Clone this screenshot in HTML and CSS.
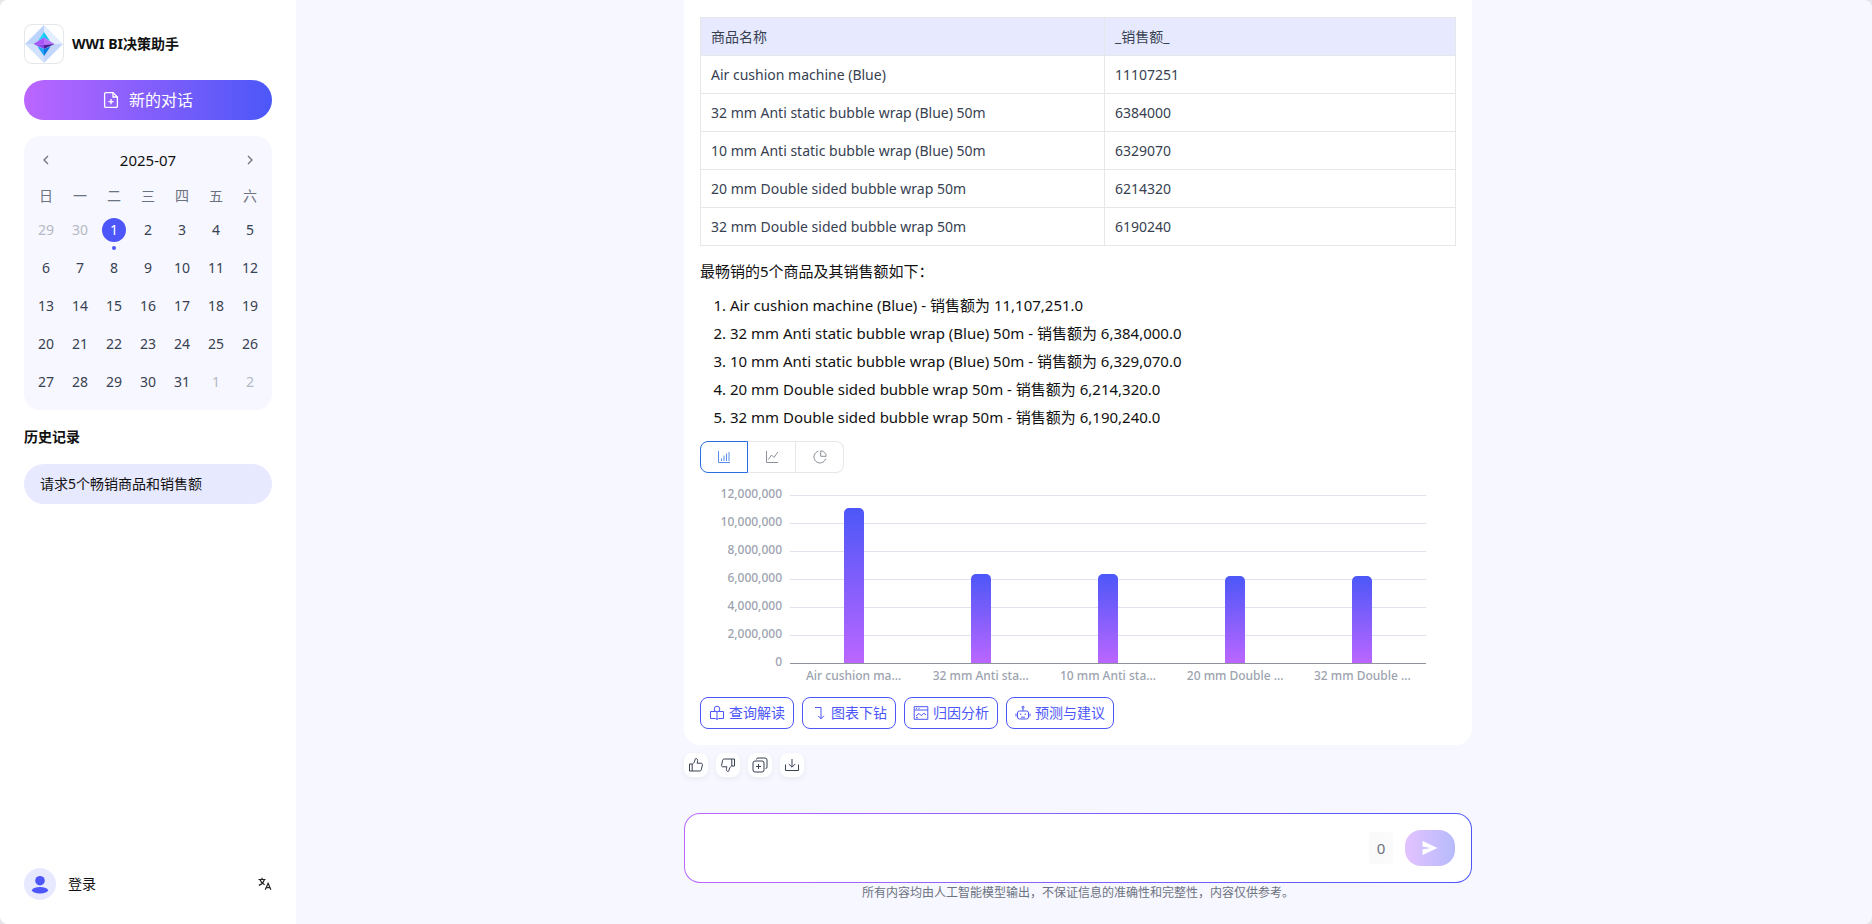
FILE: index.html
```html
<!DOCTYPE html>
<html lang="zh-CN">
<head>
  <meta charset="UTF-8">
  <meta name="viewport" content="width=device-width, initial-scale=1">
  <title>WWI BI决策助手</title>
  <link rel="stylesheet" href="styles.css">
</head>
<body>

  <div class="app">
    <aside class="sidebar">
      <header class="brand">
        <svg class="brand-logo" viewBox="1 1 38 38">
          <path d="M20 1 1 20h19z" fill="#bcd3fb"/>
          <path d="M20 1l19 19H20z" fill="#e4edfd"/>
          <path d="M1 20l19 19V20z" fill="#d3e2fc"/>
          <path d="M39 20 20 39V20z" fill="#c2d7fb"/>
          <path d="M20 8l-6 9 6-3z" fill="#22d3fa"/>
          <path d="M20 8l6 9-6-3z" fill="#12c4f5"/>
          <path d="M9.500 20L20 13.500V21z" fill="#a855f7"/>
          <path d="M30.500 20L20 13.500V21z" fill="#b872f8"/>
          <path d="M9.500 20L20 21v4z" fill="#8b45ea"/>
          <path d="M30.500 20L20 21v4z" fill="#4c1d95"/>
          <path d="M13.500 22.500L20 32v-7z" fill="#1aa5fa"/>
          <path d="M26.500 22.500L20 32v-7z" fill="#0b78e0"/>
        </svg>
        <h1>WWI BI决策助手</h1>
      </header>

      <button class="new-chat" type="button">
        <svg width="16" height="18" viewBox="0 0 16 18" fill="none" stroke="currentColor" stroke-width="1.3">
          <path d="M10 1.600H2.800A1.200 1.200 0 0 0 1.600 2.800v12.400a1.200 1.200 0 0 0 1.200 1.200h10.400a1.200 1.200 0 0 0 1.200-1.200V6z"/>
          <path d="M10 1.600V6h4.400M8 8v5.200M5.400 10.600h5.200"/>
        </svg>
        新的对话
      </button>

      <section class="calendar">
        <div class="calendar-head">
          <button type="button" aria-label="上个月"><svg width="6" height="10" viewBox="0 0 6 10"><path d="M5 1 1 5l4 4"/></svg></button>
          <span>2025-07</span>
          <button type="button" aria-label="下个月"><svg width="6" height="10" viewBox="0 0 6 10"><path d="M1 1l4 4-4 4"/></svg></button>
        </div>
        <table>
          <thead>
            <tr><th>日</th><th>一</th><th>二</th><th>三</th><th>四</th><th>五</th><th>六</th></tr>
          </thead>
          <tbody>
            <tr><td class="other">29</td><td class="other">30</td><td><span class="today">1</span></td><td>2</td><td>3</td><td>4</td><td>5</td></tr>
            <tr><td>6</td><td>7</td><td>8</td><td>9</td><td>10</td><td>11</td><td>12</td></tr>
            <tr><td>13</td><td>14</td><td>15</td><td>16</td><td>17</td><td>18</td><td>19</td></tr>
            <tr><td>20</td><td>21</td><td>22</td><td>23</td><td>24</td><td>25</td><td>26</td></tr>
            <tr><td>27</td><td>28</td><td>29</td><td>30</td><td>31</td><td class="other">1</td><td class="other">2</td></tr>
          </tbody>
        </table>
      </section>

      <h2>历史记录</h2>
      <a class="history-item" href="#">请求5个畅销商品和销售额</a>

      <footer class="user">
        <svg width="32" height="32" viewBox="0 0 32 32">
          <circle cx="16" cy="16" r="16" fill="#e7e9ff"/>
          <circle cx="16" cy="12.700" r="4.800" fill="#4d56f8"/>
          <ellipse cx="16" cy="22.300" rx="8" ry="3.200" fill="#4d56f8"/>
        </svg>
        <a href="#">登录</a>
        <button type="button" aria-label="切换语言">
          <svg width="14" height="14" viewBox="0 0 14 14" fill="none" stroke="#222" stroke-width="1.200">
            <path d="M.5 2.500h7M4 .8v1.700M6.300 2.500C5.700 5.200 3.500 7.300.8 8.400M1.900 2.500C2.600 4.700 4.300 6.500 6.600 7.700"/>
            <path d="M7.300 12.800l2.800-6.600 2.800 6.600M8.200 10.700h3.800"/>
          </svg>
        </button>
      </footer>
    </aside>

    <main class="main">
      <div class="column">
        <article class="card">
          <table class="result">
            <thead>
              <tr><th>商品名称</th><th>_销售额_</th></tr>
            </thead>
            <tbody>
              <tr><td>Air cushion machine (Blue)</td><td>11107251</td></tr>
              <tr><td>32 mm Anti static bubble wrap (Blue) 50m</td><td>6384000</td></tr>
              <tr><td>10 mm Anti static bubble wrap (Blue) 50m</td><td>6329070</td></tr>
              <tr><td>20 mm Double sided bubble wrap 50m</td><td>6214320</td></tr>
              <tr><td>32 mm Double sided bubble wrap 50m</td><td>6190240</td></tr>
            </tbody>
          </table>

          <p>最畅销的5个商品及其销售额如下：</p>
          <ol>
            <li>Air cushion machine (Blue) - 销售额为 11,107,251.0</li>
            <li>32 mm Anti static bubble wrap (Blue) 50m - 销售额为 6,384,000.0</li>
            <li>10 mm Anti static bubble wrap (Blue) 50m - 销售额为 6,329,070.0</li>
            <li>20 mm Double sided bubble wrap 50m - 销售额为 6,214,320.0</li>
            <li>32 mm Double sided bubble wrap 50m - 销售额为 6,190,240.0</li>
          </ol>

          <div class="chart-types">
            <button class="active" type="button" aria-label="柱状图">
              <svg width="14" height="14" viewBox="0 0 14 14"><path d="M1.500 1v11.500H13M4.500 8.500v2.500M7 5.500V11M9.500 3.500V11M12 2v9"/></svg>
            </button>
            <button type="button" aria-label="折线图">
              <svg width="14" height="14" viewBox="0 0 14 14"><path d="M1.500 1v11.500H13M3.500 9.500l3-4.500 2.500 2.500 3.800-5.500"/></svg>
            </button>
            <button type="button" aria-label="饼图">
              <svg width="14" height="14" viewBox="0 0 14 14"><path d="M5.300 1.200A6 6 0 1 0 12.700 8.700M7.700.8v5.500h5.500A5.600 5.600 0 0 0 7.700.8z"/></svg>
            </button>
          </div>

          <div class="chart">
            <div class="y-axis">
              <span>12,000,000</span>
              <span>10,000,000</span>
              <span>8,000,000</span>
              <span>6,000,000</span>
              <span>4,000,000</span>
              <span>2,000,000</span>
              <span>0</span>
            </div>
            <div class="plot">
              <div style="height: 92.56%"></div>
              <div style="height: 53.2%"></div>
              <div style="height: 52.74%"></div>
              <div style="height: 51.79%"></div>
              <div style="height: 51.59%"></div>
            </div>
            <div class="x-axis">
              <span>Air cushion ma...</span>
              <span>32 mm Anti sta...</span>
              <span>10 mm Anti sta...</span>
              <span>20 mm Double ...</span>
              <span>32 mm Double ...</span>
            </div>
          </div>

          <div class="actions">
            <button type="button">
              <svg width="16" height="16" viewBox="0 0 16 16"><circle cx="8" cy="4" r="2.800"/><path d="M6.500 6.500H1.500v7H6.500L8 14.500l1.500-1h5v-7h-5M8 6.800v7.700"/></svg>
              查询解读
            </button>
            <button type="button">
              <svg width="16" height="16" viewBox="0 0 16 16"><path d="M4 2.500h6V13.500M7 10.800l3 3 3-3"/></svg>
              图表下钻
            </button>
            <button type="button">
              <svg width="16" height="16" viewBox="0 0 16 16"><path d="M1.200 1.700h13.600v12.600H1.200zM1.200 5h13.600M3 3.400h1M5.500 3.400h1M3 11l3-2.600 2.200 2.300 2.700-2.500L13 10M3 12.700h2"/></svg>
              归因分析
            </button>
            <button type="button">
              <svg width="16" height="16" viewBox="0 0 16 16"><path d="M4.500 6h7a2 2 0 0 1 2 2v4a2 2 0 0 1-2 2h-7a2 2 0 0 1-2-2V8a2 2 0 0 1 2-2zM8 6V3M1 8.500v3M15 8.500v3M5.800 8.500v1.500M10.200 8.500v1.500M6 12.200h4"/><circle cx="8" cy="2.200" r="1"/></svg>
              预测与建议
            </button>
          </div>
        </article>

        <div class="feedback">
          <button type="button" aria-label="赞">
            <svg width="16" height="16" viewBox="0 0 16 16"><path d="M1.500 7h2.700v7H1.500zM4.200 7.200C6 6.200 6.800 4.500 7 2.600c0-1.500 2.600-1.500 2.600.8 0 1-.2 1.800-.5 2.800h4c1 0 1.500.7 1.300 1.600l-1.100 5c-.2.800-.7 1.200-1.500 1.200H4.200"/></svg>
          </button>
          <button type="button" aria-label="踩">
            <svg width="16" height="16" viewBox="0 0 16 16"><path d="M14.500 9h-2.700V2h2.700zM11.800 8.800C10 9.800 9.200 11.500 9 13.400c0 1.500-2.600 1.500-2.600-.8 0-1 .2-1.800.5-2.800h-4c-1 0-1.500-.7-1.300-1.600l1.100-5c.2-.8.7-1.200 1.500-1.200h7.600"/></svg>
          </button>
          <button type="button" aria-label="复制">
            <svg width="16" height="16" viewBox="0 0 16 16"><rect x="1" y="4" width="11" height="11" rx="2"/><path d="M4.500 2.500A1.500 1.500 0 0 1 6 1h7a2 2 0 0 1 2 2v7a1.500 1.500 0 0 1-1.500 1.500M6.500 7v5M4 9.500h5"/></svg>
          </button>
          <button type="button" aria-label="下载">
            <svg width="16" height="16" viewBox="0 0 16 16"><path d="M1.500 7.500v6h13v-6M8 2v8M4.800 7L8 10.200 11.200 7"/></svg>
          </button>
        </div>

        <form class="composer">
          <textarea aria-label="输入问题"></textarea>
          <span class="count">0</span>
          <button type="button" aria-label="发送">
            <svg width="16" height="14" viewBox="0 0 16 14"><path d="M.5 0 15.500 7 .5 14V8.500L8.500 7 .5 5.500z" fill="#fff"/></svg>
          </button>
        </form>
        <p class="notice">所有内容均由人工智能模型输出，不保证信息的准确性和完整性，内容仅供参考。</p>
      </div>
    </main>
  </div>

</body>
</html>
```

FILE: styles.css
```css
* {
  box-sizing: border-box;
}
body {
  margin: 0;
  background: #e6e6ea;
  color: #111;
  font-family: "Noto Sans", "Noto Sans CJK SC", sans-serif;
  font-size: 14px;
  line-height: 20px;
}
button {
  padding: 0;
  border: 0;
  background: none;
  font: inherit;
  color: inherit;
  cursor: pointer;
}
a {
  color: inherit;
  text-decoration: none;
}
svg {
  display: block;
  flex: none;
}
table {
  border-collapse: collapse;
  width: 100%;
}
.app {
  display: flex;
  min-height: 100vh;
  border-radius: 8px;
  background: #f7f7ff;
  overflow: hidden;
}

/* sidebar */
.sidebar {
  display: flex;
  flex-direction: column;
  flex: none;
  width: 296px;
  padding: 24px;
  background: #fff;
}
.brand {
  display: flex;
  align-items: center;
  gap: 8px;
}
.brand-logo {
  width: 40px;
  height: 40px;
  border: 1px solid #e5e7eb;
  border-radius: 8px;
}
.brand h1,
.sidebar h2 {
  margin: 0;
  font-size: 14px;
  font-weight: 700;
}
.new-chat {
  display: flex;
  align-items: center;
  justify-content: center;
  gap: 10px;
  height: 40px;
  margin: 16px 0;
  border-radius: 20px;
  background: linear-gradient(90deg, #bb66ff, #4c57f8);
  color: #fff;
  font-size: 16px;
}
.calendar {
  padding: 9px 5px;
  border-radius: 16px;
  background: #f7f7ff;
}
.calendar-head {
  display: flex;
  align-items: center;
  justify-content: space-between;
  height: 30px;
  font-size: 15px;
}
.calendar-head button {
  display: flex;
  justify-content: center;
  width: 34px;
}
.calendar-head path {
  fill: none;
  stroke: #6b7280;
  stroke-width: 1.3;
}
.calendar table {
  table-layout: fixed;
}
.calendar th,
.calendar td {
  height: 38px;
  padding: 0;
  color: #374151;
  font-weight: 400;
  text-align: center;
}
.calendar th {
  height: 36px;
  padding-top: 6px;
  color: #6b7280;
}
.calendar .other {
  color: #b4b9c3;
}
.calendar .today {
  position: relative;
  display: block;
  width: 24px;
  margin: 0 auto;
  border-radius: 50%;
  background: #4d56f8;
  color: #fff;
  line-height: 24px;
}
.calendar .today::after {
  content: "";
  position: absolute;
  left: 10px;
  top: 28px;
  width: 4px;
  height: 4px;
  border-radius: 50%;
  background: #4d56f8;
}
.sidebar h2 {
  margin: 17px 0;
}
.history-item {
  padding: 10px 16px;
  border-radius: 20px;
  background: #e7e9ff;
}
.user {
  display: flex;
  align-items: center;
  gap: 12px;
  margin-top: auto;
}
.user button {
  margin-left: auto;
}

/* conversation */
.main {
  display: flex;
  flex: 1;
  justify-content: center;
  padding-right: 12px;
}
.column {
  display: flex;
  flex-direction: column;
  width: 100%;
  max-width: 788px;
}
.card {
  padding: 17px 16px 16px;
  border-radius: 0 0 16px 16px;
  background: #fff;
}
.result th,
.result td {
  height: 38px;
  padding: 0 10px;
  border: 1px solid #e5e7eb;
  color: #374151;
  font-weight: 400;
  text-align: left;
}
.result th {
  background: #e7e9ff;
}
.result th:first-child {
  width: 404px;
}
.card p {
  margin: 15px 0 10px;
  font-size: 15px;
}
.card ol {
  margin: 0;
  padding-left: 30px;
  font-size: 15px;
  line-height: 28px;
}
.chart-types {
  display: flex;
  margin-top: 10px;
}
.chart-types button {
  display: flex;
  align-items: center;
  justify-content: center;
  width: 48px;
  height: 32px;
  border: 1px solid #e5e7eb;
}
.chart-types button + button {
  border-left: 0;
}
.chart-types button:first-child {
  border-radius: 8px 0 0 8px;
}
.chart-types button:last-child {
  border-radius: 0 8px 8px 0;
}
.chart-types .active {
  border-color: #2a6fe0;
}
.chart-types path {
  fill: none;
  stroke: #8b909a;
}
.chart-types .active path {
  stroke: #5b8def;
}
.chart {
  display: grid;
  grid-template-columns: 82px 1fr;
  column-gap: 8px;
  margin-top: 11px;
  padding-right: 30px;
  color: #9ca3af;
  font-size: 12px;
  font-weight: 500;
  line-height: 20px;
}
.y-axis {
  display: flex;
  flex-direction: column;
  justify-content: space-between;
  height: 188px;
  margin-bottom: -10px;
  text-align: right;
}
.y-axis span {
  height: 20px;
}
.plot {
  display: flex;
  align-items: flex-end;
  justify-content: space-around;
  height: 169px;
  margin-top: 11px;
  border-bottom: 1px solid #8f939e;
  background: repeating-linear-gradient(#e0e3ee 0 1px, transparent 1px 28px);
}
.plot div {
  width: 20px;
  border-radius: 5px 5px 0 0;
  background: linear-gradient(#4c57f8, #bb66ff);
}
.x-axis {
  display: grid;
  grid-column: 2;
  grid-template-columns: repeat(5, 1fr);
  padding-top: 2px;
  text-align: center;
}
.actions {
  display: flex;
  gap: 8px;
  margin-top: 11px;
}
.actions button {
  display: flex;
  align-items: center;
  gap: 4px;
  height: 32px;
  padding: 0 8px;
  border: 1px solid #4d56f8;
  border-radius: 8px;
  color: #4d56f8;
}
.actions svg,
.feedback svg {
  fill: none;
  stroke: currentColor;
}
.feedback {
  display: flex;
  gap: 8px;
  margin-top: 8px;
}
.feedback button {
  display: flex;
  align-items: center;
  justify-content: center;
  width: 24px;
  height: 24px;
  border-radius: 8px;
  background: #fff;
  box-shadow: 0 2px 6px rgba(0, 0, 0, 0.06);
  color: #374151;
}

/* input */
.composer {
  display: flex;
  align-items: center;
  height: 70px;
  margin-top: auto;
  padding: 0 16px;
  border: 1px solid transparent;
  border-radius: 16px;
  background: linear-gradient(#fff, #fff) padding-box, linear-gradient(90deg, #bb66ff, #4c57f8) border-box;
}
.composer textarea {
  flex: 1;
  height: 40px;
  border: 0;
  outline: 0;
  resize: none;
  background: none;
  font: inherit;
}
.count {
  width: 24px;
  margin: 0 12px;
  border-radius: 4px;
  background: #fafafa;
  color: #6b7280;
  font-size: 15px;
  line-height: 32px;
  text-align: center;
}
.composer button {
  display: flex;
  align-items: center;
  justify-content: center;
  width: 50px;
  height: 36px;
  border-radius: 16px;
  background: linear-gradient(90deg, #e4c2ff, #b6bbfc);
}
.notice {
  margin: 0 0 21px;
  color: #6b7280;
  font-size: 12px;
  line-height: 20px;
  text-align: center;
}
@media (max-width: 1000px) {
  .main {
    padding: 0 12px;
  }
}
```
